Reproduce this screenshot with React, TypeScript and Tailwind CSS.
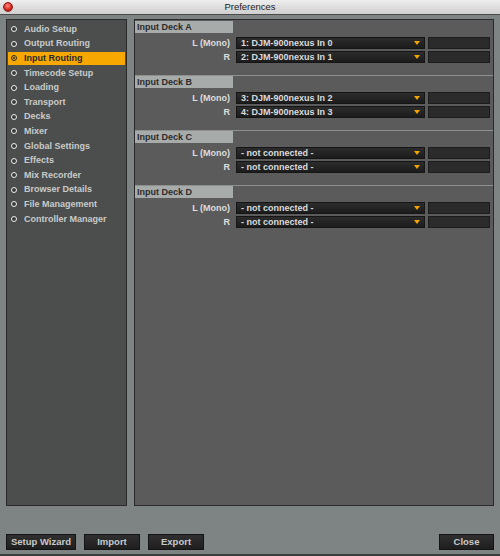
const menuItems = [
  "Audio Setup",
  "Output Routing",
  "Input Routing",
  "Timecode Setup",
  "Loading",
  "Transport",
  "Decks",
  "Mixer",
  "Global Settings",
  "Effects",
  "Mix Recorder",
  "Browser Details",
  "File Management",
  "Controller Manager",
];

const decks = [
  { name: "Input Deck A", l: "1: DJM-900nexus In 0", r: "2: DJM-900nexus In 1" },
  { name: "Input Deck B", l: "3: DJM-900nexus In 2", r: "4: DJM-900nexus In 3" },
  { name: "Input Deck C", l: "- not connected -", r: "- not connected -" },
  { name: "Input Deck D", l: "- not connected -", r: "- not connected -" },
];

function SideItem({ label, selected }: { label: string; selected: boolean }) {
  return (
    <div className="h-[14.6px] flex items-center">
      <div
        className={`h-[13px] w-full mx-[1px] flex items-center ${
          selected ? "bg-[#f7a800] text-[#2a2a2a]" : "text-[#c9cbca]"
        }`}
      >
        <span
          className={`ml-[3px] w-[6px] h-[6px] rounded-full border-[1.5px] flex items-center justify-center ${
            selected ? "border-[#2a2a2a]" : "border-[#eeeeee] bg-[#3a3c3b]"
          }`}
        >
          {selected && <span className="w-[2px] h-[2px] rounded-full bg-[#2a2a2a]" />}
        </span>
        <span className="ml-[7px] text-[9px] font-bold leading-none">{label}</span>
      </div>
    </div>
  );
}

function Dropdown({ value }: { value: string }) {
  return (
    <div className="flex items-center h-[12px]">
      <div className="w-[189px] h-full bg-gradient-to-b from-[#2c2c2c] to-[#1c1c1c] border border-[#151515] flex items-center justify-between pl-[4px] pr-[4px]">
        <span className="text-[9px] font-bold text-[#dcdcdc] leading-none">{value}</span>
        <svg width="6" height="4" viewBox="0 0 6 4">
          <path d="M0 0H6L3 4Z" fill="#f2a500" />
        </svg>
      </div>
      <div className="ml-[3px] w-[62px] h-full bg-[#2b2b2b] border border-[#1c1c1c]" />
    </div>
  );
}

function DeckSection({
  deck,
  first,
}: {
  deck: { name: string; l: string; r: string };
  first: boolean;
}) {
  return (
    <div className={`pb-[12px] ${first ? "" : "border-t border-[#8c908f]"}`}>
      <div className="w-[98px] h-[12px] bg-[#a7acab] flex items-center pl-[2px]">
        <span className="text-[9px] font-bold text-[#2b2b2b] leading-none">{deck.name}</span>
      </div>
      <div className="mt-[4px] flex flex-col gap-[2px]">
        {[
          ["L (Mono)", deck.l],
          ["R", deck.r],
        ].map(([label, value]) => (
          <div key={label} className="flex items-center">
            <div className="w-[95px] text-right text-[9px] font-bold text-[#dedede] leading-none">
              {label}
            </div>
            <div className="ml-[6px]">
              <Dropdown value={value} />
            </div>
          </div>
        ))}
      </div>
    </div>
  );
}

function Button({ label, width }: { label: string; width: string }) {
  return (
    <button
      className={`${width} h-[16px] bg-gradient-to-b from-[#303030] to-[#1e1e1e] border border-[#141414] text-[9.5px] font-bold text-[#c9c9c9] leading-none flex items-center justify-center`}
    >
      {label}
    </button>
  );
}

export default function App() {
  return (
    <div className="w-[500px] h-[556px] flex flex-col bg-[#7e8483] font-['Liberation_Sans',Arial,sans-serif] overflow-hidden">
      <div className="h-[15px] bg-gradient-to-b from-[#eeeeee] to-[#cfcfcf] border-b border-[#4a4a4a] relative flex items-center justify-center">
        <span className="absolute left-[3px] top-[1.5px] w-[10px] h-[10px] rounded-full bg-[radial-gradient(circle_at_45%_35%,#ff8a80,#d2231b_60%,#8e1410)] border border-[#8a1a14]" />
        <span className="text-[9.5px] text-[#1a1a1a] leading-none">Preferences</span>
      </div>

      <div className="flex-1 flex flex-col px-[6px] border-b-2 border-[#3a3d3c]">
        <div className="mt-[4px] h-[487px] flex">
          <div className="w-[121px] h-full bg-[#4b4e4d] border border-[#2a2a2a] pt-[2px]">
            {menuItems.map((item) => (
              <SideItem key={item} label={item} selected={item === "Input Routing"} />
            ))}
          </div>
          <div className="ml-[7px] flex-1 h-full bg-[#5a5b5a] border border-[#2a2a2a] pt-[1px]">
            {decks.map((deck, i) => (
              <DeckSection key={deck.name} deck={deck} first={i === 0} />
            ))}
          </div>
        </div>

        <div className="mt-[28px] flex items-center">
          <Button label="Setup Wizard" width="w-[70px]" />
          <div className="ml-[8px]">
            <Button label="Import" width="w-[56px]" />
          </div>
          <div className="ml-[8px]">
            <Button label="Export" width="w-[56px]" />
          </div>
          <div className="ml-auto">
            <Button label="Close" width="w-[55px]" />
          </div>
        </div>
      </div>
    </div>
  );
}
